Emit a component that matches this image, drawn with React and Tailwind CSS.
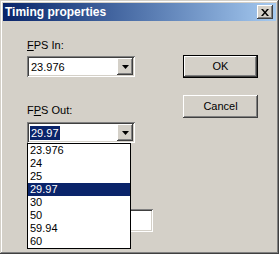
import React from 'react';

const sunken =
  'shadow-[inset_1px_1px_#808080,inset_-1px_-1px_#ffffff,inset_2px_2px_#404040,inset_-2px_-2px_#d4d0c8]';
const raised =
  'shadow-[inset_-1px_-1px_#404040,inset_1px_1px_#ffffff,inset_-2px_-2px_#808080,inset_2px_2px_#d4d0c8]';

const fpsList = ['23.976', '24', '25', '29.97', '30', '50', '59.94', '60'];

const DropButton = () => (
  <div className={`w-[16px] h-[17px] bg-[#d4d0c8] flex items-center justify-center ${raised}`}>
    <svg width="7" height="4" viewBox="0 0 7 4">
      <path d="M0 0h7L3.5 4z" fill="#000" />
    </svg>
  </div>
);

const Combo = ({ value, selected }) => (
  <div className={`w-[108px] h-[21px] bg-white flex items-center justify-between p-[2px] ${sunken}`}>
    {selected ? (
      <span className="ml-[1px] h-[14px] leading-[14px] px-[1px] bg-[#0a246a] text-white">{value}</span>
    ) : (
      <span className="ml-[2px] leading-[14px] text-black">{value}</span>
    )}
    <DropButton />
  </div>
);

const Button = ({ children, isDefault }) => (
  <div
    className={`w-[75px] h-[23px] bg-[#d4d0c8] flex items-center justify-center text-black ${
      isDefault
        ? 'border border-black shadow-[inset_-1px_-1px_#404040,inset_1px_1px_#ffffff,inset_-2px_-2px_#808080]'
        : raised
    }`}
  >
    {children}
  </div>
);

export default function App() {
  return (
    <div
      className="w-[279px] h-[254px] bg-[#d4d0c8] p-[3px] shadow-[inset_-1px_-1px_#404040,inset_1px_1px_#d4d0c8,inset_-2px_-2px_#808080,inset_2px_2px_#ffffff] text-[11px] overflow-hidden"
      style={{ fontFamily: '"Liberation Sans", Arial, sans-serif' }}
    >
      <div className="h-[18px] flex items-center justify-between bg-gradient-to-r from-[#0a246a] to-[#a6caf0] pl-[2px] pr-[3px]">
        <span className="text-white font-bold text-[12px] leading-[18px]">Timing properties</span>
        <div className={`w-[16px] h-[14px] bg-[#d4d0c8] flex items-center justify-center ${raised}`}>
          <svg width="8" height="7" viewBox="0 0 8 7">
            <path d="M0 0h2l2 2.5L6 0h2L5 3.5 8 7H6L4 4.5 2 7H0l3-3.5z" fill="#000" />
          </svg>
        </div>
      </div>

      <div className="flex">
        <div className="pl-[24px] w-[132px] shrink-0 relative">
          <div className="mt-[18px] leading-[13px] text-black">
            <span className="underline">F</span>PS In:
          </div>
          <div className="mt-[4px]">
            <Combo value="23.976" />
          </div>

          <div className="mt-[27px] leading-[13px] text-black">
            F<span className="underline">P</span>S Out:
          </div>
          <div className="mt-[5px] relative">
            <Combo value="29.97" selected />
            <div className="absolute left-0 top-[21px] w-[104px] bg-white border border-black z-10">
              {fpsList.map((v) => (
                <div
                  key={v}
                  className={`h-[13px] leading-[13px] pl-[2px] ${
                    v === '29.97' ? 'bg-[#0a246a] text-white' : 'text-black'
                  }`}
                >
                  {v}
                </div>
              ))}
            </div>
          </div>

          <div className={`mt-[66px] w-[126px] h-[23px] bg-white ${sunken}`} />
        </div>

        <div className="ml-[48px] mt-[34px] flex flex-col gap-[17px]">
          <Button isDefault>OK</Button>
          <Button>Cancel</Button>
        </div>
      </div>
    </div>
  );
}
